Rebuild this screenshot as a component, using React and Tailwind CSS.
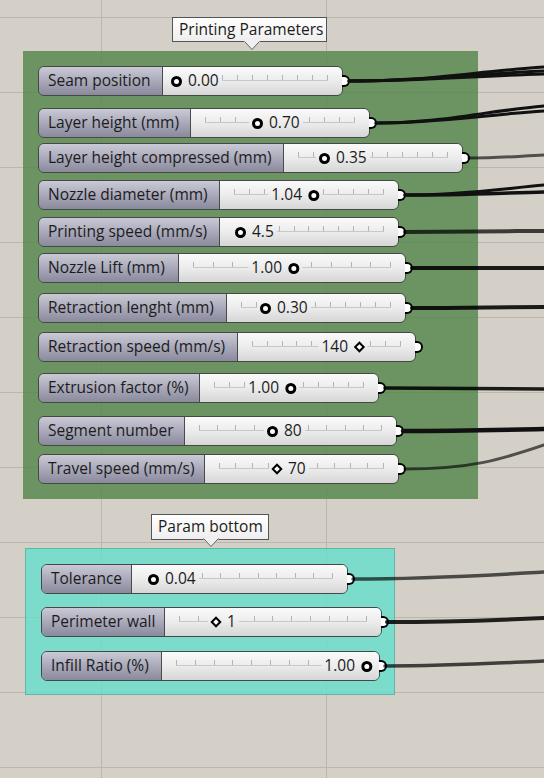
import React from 'react';

const topRows = [
  { label: 'Seam position', w: 'w-[305px]', lw: 'w-[124px]', mt: 'mt-0', knob: 14, side: 'right', kind: 'ring', value: '0.00' },
  { label: 'Layer height (mm)', w: 'w-[332px]', lw: 'w-[152px]', mt: 'mt-[12px]', knob: 67, side: 'right', kind: 'ring', value: '0.70' },
  { label: 'Layer height compressed (mm)', w: 'w-[425px]', lw: 'w-[245px]', mt: 'mt-[5px]', knob: 41, side: 'right', kind: 'ring', value: '0.35' },
  { label: 'Nozzle diameter (mm)', w: 'w-[361px]', lw: 'w-[181px]', mt: 'mt-[7px]', knob: 93, side: 'left', kind: 'ring', value: '1.04' },
  { label: 'Printing speed (mm/s)', w: 'w-[361px]', lw: 'w-[181px]', mt: 'mt-[7px]', knob: 21, side: 'right', kind: 'ring', value: '4.5' },
  { label: 'Nozzle Lift (mm)', w: 'w-[368px]', lw: 'w-[140px]', mt: 'mt-[6px]', knob: 114, side: 'left', kind: 'ring', value: '1.00' },
  { label: 'Retraction lenght (mm)', w: 'w-[368px]', lw: 'w-[188px]', mt: 'mt-[10px]', knob: 39, side: 'right', kind: 'ring', value: '0.30' },
  { label: 'Retraction speed (mm/s)', w: 'w-[378px]', lw: 'w-[199px]', mt: 'mt-[9px]', knob: 120, side: 'left', kind: 'diamond', value: '140', noWire: true },
  { label: 'Extrusion factor (%)', w: 'w-[341px]', lw: 'w-[161px]', mt: 'mt-[11px]', knob: 90, side: 'left', kind: 'ring', value: '1.00' },
  { label: 'Segment number', w: 'w-[359px]', lw: 'w-[146px]', mt: 'mt-[13px]', knob: 88, side: 'right', kind: 'ring', value: '80' },
  { label: 'Travel speed (mm/s)', w: 'w-[361px]', lw: 'w-[166px]', mt: 'mt-[8px]', knob: 73, side: 'right', kind: 'diamond', value: '70' },
];

const bottomRows = [
  { label: 'Tolerance', w: 'w-[307px]', lw: 'w-[90px]', mt: 'mt-0', knob: 22, side: 'right', kind: 'ring', value: '0.04' },
  { label: 'Perimeter wall', w: 'w-[341px]', lw: 'w-[123px]', mt: 'mt-[13px]', knob: 52, side: 'right', kind: 'diamond', value: '1' },
  { label: 'Infill Ratio (%)', w: 'w-[339px]', lw: 'w-[120px]', mt: 'mt-[14px]', knob: 204, side: 'left', kind: 'ring', value: '1.00' },
];

// wires: [path, color, width]
const wires = [
  ['M349,81 C430,81 470,72 544,67', '#111', 3],
  ['M349,81 C430,81 470,74 544,71', '#111', 3],
  ['M349,81 C430,81 470,76 544,74', '#111', 3],
  ['M376,123 C440,123 480,112 544,106', '#111', 3],
  ['M376,123 C440,123 480,115 544,111', '#111', 3],
  ['M469,158 C500,158 520,156 544,155', 'rgba(0,0,0,0.62)', 3],
  ['M405,195 C460,195 500,189 544,185', '#111', 3],
  ['M405,195 C460,195 500,193 544,192', '#111', 3.5],
  ['M405,232 C460,232 500,231 544,231', 'rgba(0,0,0,0.72)', 4],
  ['M412,268 C470,268 500,268 544,268', 'rgba(0,0,0,0.88)', 4],
  ['M412,308 C470,308 500,307 544,307', 'rgba(0,0,0,0.88)', 4],
  ['M385,388 C450,388 500,389 544,389', 'rgba(0,0,0,0.88)', 3.5],
  ['M403,431 C460,431 500,430 544,429', '#111', 4.5],
  ['M405,469 C470,469 500,460 544,445', 'rgba(0,0,0,0.62)', 3],
  ['M353,579 C430,579 490,575 544,572', 'rgba(0,0,0,0.65)', 3.5],
  ['M387,622 C450,622 500,620 544,618', 'rgba(0,0,0,0.85)', 4],
  ['M385,666 C450,666 500,663 544,661', 'rgba(0,0,0,0.7)', 3.5],
];

function Knob({ kind }) {
  if (kind === 'diamond') {
    return <span className="block w-[8px] h-[8px] mx-[1px] rotate-45 border-2 border-black bg-white" />;
  }
  return <span className="block w-[11px] h-[11px] rounded-full border-[3px] border-black bg-white" />;
}

function Slider({ row }) {
  const isRight = row.side === 'right';
  return (
    <div className={`relative ${row.mt} ${row.w} h-[30px] shrink-0`}>
      <div className="flex h-full rounded-[6px] border border-[#474747] overflow-hidden text-[#1c1c1c]">
        <div className={`${row.lw} shrink-0 flex items-center pl-[9px] border-r border-[#4a4a4a] bg-linear-to-b from-[#cacad6] via-[#a9a9ba] to-[#8a8a9d] whitespace-nowrap`}>
          {row.label}
        </div>
        <div className="relative flex-1 bg-linear-to-b from-[#fafafa] via-[#ececec] to-[#d6d6d6]">
          <div className="absolute left-[14px] right-[14px] top-[9px] h-[5px] flex justify-between items-end border-b border-[#c8c8c8]">
            {Array.from({ length: 11 }).map((_, i) => (
              <span key={i} className="block w-px h-[5px] bg-[#b4b4b4]" />
            ))}
          </div>
          <div
            className={`absolute top-0 bottom-0 flex items-center gap-[6px] px-[3px] bg-linear-to-b from-[#fafafa] via-[#ececec] to-[#d6d6d6] ${isRight ? '' : '-translate-x-full'}`}
            style={{ left: isRight ? row.knob - 9 : row.knob + 9 }}
          >
            {isRight ? (
              <>
                <Knob kind={row.kind} />
                <span className="leading-none">{row.value}</span>
              </>
            ) : (
              <>
                <span className="leading-none">{row.value}</span>
                <Knob kind={row.kind} />
              </>
            )}
          </div>
        </div>
      </div>
      <span className="absolute right-[-7px] top-1/2 -translate-y-1/2 w-[8px] h-[12px] rounded-r-full bg-white border-2 border-l-0 border-black" />
    </div>
  );
}

function Tag({ text, box, tip }) {
  return (
    <div className={`relative ${box} flex items-center pl-[6px] border border-[#555] bg-linear-to-b from-white to-[#eeeeee] text-[#1c1c1c] whitespace-nowrap`}>
      {text}
      <svg className={`absolute ${tip} top-[22px]`} width="16" height="12" viewBox="0 0 16 12">
        <polygon points="0,0 16,0 16,2 8,10 0,2" fill="#f0f0f0" />
        <polyline points="0.5,1.5 8,9.5 15.5,1.5" fill="none" stroke="#555" strokeWidth="1" />
      </svg>
    </div>
  );
}

export default function App() {
  const hLines = Array.from({ length: 11 }).map((_, i) => 17.5 + i * 75);
  return (
    <div className="relative w-[544px] h-[778px] overflow-hidden bg-[#d4d0c8] font-['Open_Sans',sans-serif] text-[15.5px]">
      <svg className="absolute inset-0" width="544" height="778">
        {hLines.map(y => (
          <line key={y} x1="0" x2="544" y1={y} y2={y} stroke="#bbb7af" strokeWidth="1" />
        ))}
        <line x1="101.5" x2="101.5" y1="0" y2="778" stroke="#bbb7af" strokeWidth="1" />
        <line x1="326.5" x2="326.5" y1="0" y2="778" stroke="#bbb7af" strokeWidth="1" />
      </svg>

      <div className="relative flex flex-col pt-[17px]">
        <Tag text="Printing Parameters" box="ml-[172px] w-[155px] h-[25px]" tip="left-[71px]" />
        <div className="mt-[9px] ml-[23px] w-[455px] h-[448px] pt-[15px] pl-[15px] flex flex-col bg-[rgba(81,132,73,0.8)]">
          {topRows.map(r => <Slider key={r.label} row={r} />)}
        </div>

        <div className="mt-[15px]">
          <Tag text="Param bottom" box="ml-[151px] w-[118px] h-[26px]" tip="left-[51px]" />
        </div>
        <div className="mt-[8px] ml-[25px] w-[370px] h-[147px] pt-[15px] pl-[15px] flex flex-col border border-[rgba(60,150,135,0.5)] bg-[rgba(100,223,205,0.8)]">
          {bottomRows.map(r => <Slider key={r.label} row={r} />)}
        </div>
      </div>

      <svg className="absolute inset-0 pointer-events-none" width="544" height="778">
        {wires.map(([d, c, w], i) => (
          <path key={i} d={d} fill="none" stroke={c} strokeWidth={w} strokeLinecap="round" />
        ))}
      </svg>
    </div>
  );
}
